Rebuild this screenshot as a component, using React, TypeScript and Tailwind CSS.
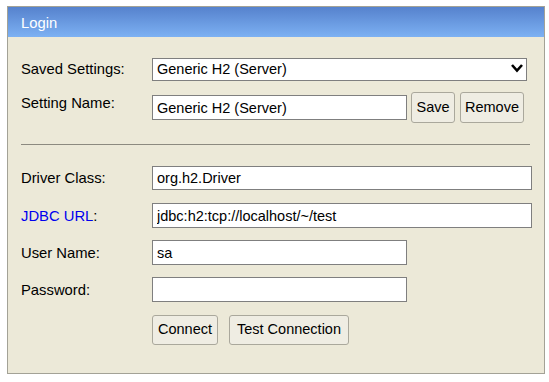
import { useState } from 'react';

const inputClass =
  'h-full border border-[#7f7f7f] bg-white px-[4px] text-[14.5px] text-black outline-none';

const buttonClass =
  'h-full rounded-[3px] border border-[#aaa89c] bg-[#efede3] px-[4px] text-[14.5px] text-black';

function Row({
  label,
  children,
  className,
  labelClass,
}: {
  label: React.ReactNode;
  children: React.ReactNode;
  className: string;
  labelClass?: string;
}) {
  return (
    <div className={`flex items-center ${className}`}>
      <div className={`w-[131px] shrink-0 text-[14.8px] leading-[16px] ${labelClass ?? ''}`}>{label}</div>
      {children}
    </div>
  );
}

export default function App() {
  const [form, setForm] = useState({
    setting: 'Generic H2 (Server)',
    name: 'Generic H2 (Server)',
    driver: 'org.h2.Driver',
    url: 'jdbc:h2:tcp://localhost/~/test',
    user: 'sa',
    password: '',
  });

  const set = (k: keyof typeof form) => (e: React.ChangeEvent<HTMLInputElement | HTMLSelectElement>) =>
    setForm((prev) => ({ ...prev, [k]: e.target.value }));

  return (
    <div
      className="h-[382px] w-full bg-white pl-[7px] pt-[6px] text-black"
      style={{ fontFamily: '"Liberation Sans", Arial, sans-serif' }}
    >
      <div className="h-[368px] w-[538px] border border-[#a3a296] bg-[#ece9d8]">
        {/* Header */}
        <div className="flex h-[30px] items-center bg-gradient-to-b from-[#5682cd] to-[#7db1f3] pl-[13px] pt-[2px] text-[14.8px] text-white">
          Login
        </div>

        <div className="pl-[13px]">
          <Row label="Saved Settings:" className="mt-[20px] h-[23px]">
            <div className="relative h-full w-[375px]">
              <select
                value={form.setting}
                onChange={set('setting')}
                className={`${inputClass} w-full appearance-none`}
              >
                <option>Generic H2 (Server)</option>
                <option>Generic H2 (Embedded)</option>
              </select>
              <svg
                className="pointer-events-none absolute right-[3px] top-[6px]"
                width="14"
                height="10"
                viewBox="0 0 14 10"
              >
                <polyline points="2,2 7,7.5 12,2" fill="none" stroke="#000" strokeWidth="2.6" />
              </svg>
            </div>
          </Row>

          <Row label="Setting Name:" className="mt-[12px] h-[31px]" labelClass="-mt-[10px]">
            <input value={form.name} onChange={set('name')} className={`${inputClass} !h-[25px] w-[255px]`} />
            <button className={`${buttonClass} ml-[4px] w-[44px]`}>Save</button>
            <button className={`${buttonClass} ml-[5px] w-[64px]`}>Remove</button>
          </Row>

          <div className="mt-[21px] h-px w-[509px] bg-[#8c8a80]" />

          <Row label="Driver Class:" className="mt-[21px] h-[24px]">
            <input value={form.driver} onChange={set('driver')} className={`${inputClass} w-[380px]`} />
          </Row>

          <Row
            label={
              <>
                <span className="text-[#0000ee]">JDBC URL</span>:
              </>
            }
            className="mt-[13px] h-[25px]"
          >
            <input value={form.url} onChange={set('url')} className={`${inputClass} w-[380px]`} />
          </Row>

          <Row label="User Name:" className="mt-[12px] h-[25px]">
            <input value={form.user} onChange={set('user')} className={`${inputClass} w-[255px]`} />
          </Row>

          <Row label="Password:" className="mt-[12px] h-[25px]">
            <input
              type="password"
              value={form.password}
              onChange={set('password')}
              className={`${inputClass} w-[255px]`}
            />
          </Row>

          <div className="mt-[13px] flex h-[30px] pl-[131px]">
            <button className={`${buttonClass} w-[66px]`}>Connect</button>
            <button className={`${buttonClass} ml-[11px] w-[120px]`}>Test Connection</button>
          </div>
        </div>
      </div>
    </div>
  );
}
